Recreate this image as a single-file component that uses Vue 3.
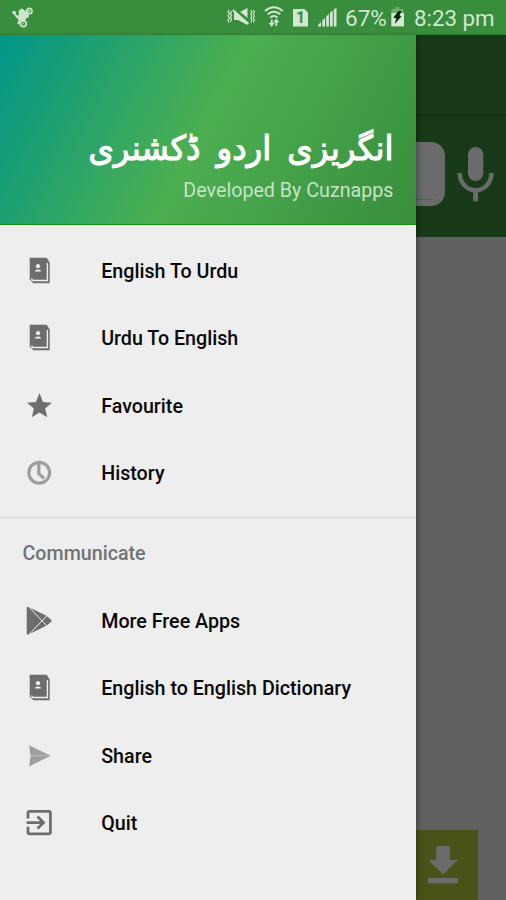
<script setup>
const primary = [
  { label: 'English To Urdu', icon: 'book' },
  { label: 'Urdu To English', icon: 'book' },
  { label: 'Favourite', icon: 'star' },
  { label: 'History', icon: 'clock' },
]
const communicate = [
  { label: 'More Free Apps', icon: 'play' },
  { label: 'English to English Dictionary', icon: 'book' },
  { label: 'Share', icon: 'send' },
  { label: 'Quit', icon: 'exit' },
]
const groups = [
  { title: '', items: primary },
  { title: 'Communicate', items: communicate },
]
</script>

<template>
  <div class="screen">
    <header class="status">
      <svg class="bike" width="24" height="35" viewBox="11 0 24 35">
        <g fill="none" stroke="#cfe5cf">
          <circle cx="29.3" cy="11" r="2.7" stroke-width="1.7" />
          <circle cx="23.3" cy="23.8" r="2.9" stroke-width="1.7" />
          <path d="M14 13l3 4 4-2M18 24l2-4" stroke-width="2" />
        </g>
        <path fill="#cfe5cf" d="M12 11.5l2.5-.8 1.6 1.5-1 2-2.4-.2zM18.500 11l3-2.500 2.500 1 1 2 3.500 1.200.5 4-3 2-1.500 2.800-4-.5-3-2 1.500-3.500zM25 11l2.2-1.2 1.6 1.2-2 2z" />
        <circle cx="23.3" cy="23.8" r=".8" fill="#cfe5cf" /><circle cx="29.3" cy="11" r=".9" fill="#cfe5cf" />
      </svg>
      <svg class="mute" width="30" height="35" viewBox="227 0 30 35">
        <g fill="none" stroke="#d3e7d3" stroke-width="1.2">
          <path d="M229 10l-1 2 1.5 2-1.5 2 1.5 2-1.5 2 1 2.5M231.500 11l-1 2 1 2-1 2 1 2-1 3M250.800 10l1 2-1 2 1 2-1 2 1 2-1 2.500M253.300 10l1 2-1 2 1 2-1 2 1 2-1 2.500" />
        </g>
        <path fill="#d3e7d3" d="M234 13h4l9.500-5v17l-9.500-5h-4z" />
        <path d="M231.500 7.500l18 14.500" stroke="#388e3c" stroke-width="4" />
        <path d="M232.800 10l15.700 14" stroke="#d3e7d3" stroke-width="1.900" />
      </svg>
      <svg class="wifi" width="22" height="35" viewBox="263 0 22 35">
        <g fill="none" stroke="#d3e7d3" stroke-width="1.900">
          <path d="M265 11q8.900-7.500 17.800 0M267.600 14.200q6.300-5 12.600 0M270.300 17.400q3.600-2.700 7.200 0" />
          <path d="M271.800 19.500v6M276.300 20v6" stroke-width="1.700" />
        </g>
        <path fill="#d3e7d3" d="M268.500 22.700h6.200l-3.200 4zM273.300 22.300h6l-3-3.800z" />
      </svg>
      <span class="sim">1</span>
      <svg class="signal" width="20" height="35" viewBox="318 0 20 35">
        <path fill="#d3e7d3" d="M318 26.500v-1.500l3-3v4.500zM322.300 26.500v-6l2.700-2.500v8.500zM326.200 26.500v-10l2.700-2.700v12.700zM330 26.500v-13.800l2.700-2.200v16zM333.800 26.500v-17l2.700-1.700v18.700z" />
      </svg>
      <span class="pct">67%</span>
      <svg class="battery" width="14" height="35" viewBox="391 0 14 35">
        <path fill="#6fae71" d="M395.500 7h4v2h4v5h-12v-5h4z" />
        <path fill="#d3e7d3" d="M391.300 13h12.700v13.400h-12.700z" />
        <path fill="#0a260d" d="M398.500 11h3l-2 4.500 2 .8-6.800 7.700 1.600-5.700-3-.6z" />
      </svg>
      <span class="time">8:23 pm</span>
    </header>

    <main class="page">
      <div class="toolbar"></div>
      <div class="search">
        <div class="field"><i></i></div>
        <svg class="mic" width="38" height="58" viewBox="456 145 38 58">
          <rect x="468" y="147" width="15.300" height="34" rx="7.650" fill="#6b6b6b" />
          <path d="M459.700 173a15.900 17.200 0 0 0 31.800 0" fill="none" stroke="#6b6b6b" stroke-width="4.400" />
          <path d="M473.100 190h5v11.300h-5z" fill="#6b6b6b" />
        </svg>
      </div>
      <div class="body">
        <div class="download">
          <svg width="32" height="40" viewBox="427 845 32 40">
            <path fill="#6b6b6b" d="M436.300 846h13.500v14h8l-14.800 14.600-14.800-14.600h8.100zM428 878h30v5.200h-30z" />
          </svg>
        </div>
      </div>
    </main>

    <aside class="drawer">
      <div class="hero">
        <h1 dir="rtl" lang="ur">انگریزی اردو ڈکشنری</h1>
        <p>Developed By Cuznapps</p>
      </div>
      <nav>
        <section v-for="(group, g) in groups" :key="g" class="group">
          <h2 v-if="group.title">{{ group.title }}</h2>
          <a v-for="item in group.items" :key="item.label" class="row">
            <svg width="34" height="34" viewBox="0 0 34 34">
              <g v-if="item.icon === 'book'">
                <path fill="#6d6d6d" d="M7.700 3.800h17l3 4.700v20.700h-16.400l-3.600-4z" />
                <path d="M25.400 9v17.500h-14.500l-1.600-1.800" fill="none" stroke="#eee" stroke-width="1.400" />
                <circle cx="16" cy="12.200" r="2.100" fill="#eee" />
                <path d="M12.900 17.500q0-2 3.100-2t3.100 2z" fill="#eee" />
              </g>
              <path v-else-if="item.icon === 'star'" fill="#6d6d6d" transform="translate(2.600 2.200) scale(1.240)" d="M12 17.270L18.180 21l-1.640-7.030L22 9.240l-7.190-.610L12 1.500 9.190 8.630 2 9.240l5.460 4.730L5.820 21z" />
              <g v-else-if="item.icon === 'clock'" fill="none" stroke="#9e9e9e" stroke-width="3.200">
                <circle cx="17.200" cy="16.700" r="10.400" />
                <path d="M16.800 8v9.600l5.300 4.900" />
              </g>
              <g v-else-if="item.icon === 'play'">
                <path fill="#6d6d6d" d="M4.700 3.800q.3-1.400 1.800-.8l17.900 8.800 4.400 3.600q1.800 1.400 0 2.800l-4.400 3.600-17.900 8.800q-1.500.6-1.800-.8z" />
                <path d="M6.500 2.500l18.200 19.200M6.500 31.100l18.200-19.200" stroke="#eee" stroke-width="1" />
              </g>
              <g v-else-if="item.icon === 'send'">
                <path fill="#9e9e9e" d="M7 6.200l21.700 10.600-21.700 10.700 1.700-10.700z" />
                <path d="M8.500 16.800h17" stroke="#c8c8c8" stroke-width=".8" />
              </g>
              <path v-else fill="#6d6d6d" transform="translate(.4 -.2) scale(1.400)" d="M10.090 15.590L11.500 17l5-5-5-5-1.410 1.410L12.670 11H3v2h9.670l-2.580 2.590zM19 3H5c-1.110 0-2 .9-2 2v4h2V5h14v14H5v-4H3v4c0 1.100.89 2 2 2h14c1.100 0 2-.9 2-2V5c0-1.100-.9-2-2-2z" />
            </svg>
            <span>{{ item.label }}</span>
          </a>
        </section>
      </nav>
    </aside>
  </div>
</template>

<style>
body { margin: 0; }
</style>

<style scoped>
.screen { position: relative; display: flex; flex-direction: column; width: 506px; height: 900px; overflow: hidden; font-family: Roboto, "Liberation Sans", sans-serif; }
.status { display: flex; align-items: center; box-sizing: border-box; height: 35px; padding-left: 11px; background: #388e3c; color: #d3e7d3; white-space: nowrap; }
.status svg, .status span { flex: none; }
.mute { margin-left: 192px; }
.wifi { margin-left: 6px; }
.sim { width: 15px; height: 18px; margin-left: 8px; background: #d3e7d3; color: #388e3c; font-size: 16px; font-weight: 700; line-height: 18px; text-align: center; clip-path: polygon(0 0, 11px 0, 100% 4px, 100% 100%, 0 100%); }
.signal { margin-left: 10px; }
.pct { width: 46px; padding: 1px 0 0 7px; box-sizing: border-box; margin-right: 7px; font-size: 22.500px; }
.time { margin-left: 9px; padding-top: 1px; font-size: 22.300px; }
.page { flex: 1; display: flex; flex-direction: column; background: #616161; }
.toolbar { position: relative; height: 79px; background: #183a18; box-shadow: 0 1px 3px #102b10; }
.search { display: flex; align-items: center; justify-content: flex-end; box-sizing: border-box; height: 123px; padding: 0 12px 4px 0; background: #183a18; }
.field { display: flex; align-items: flex-end; box-sizing: border-box; width: 420px; height: 64px; padding: 0 11px 6px; margin-right: 11px; border-radius: 14px; background: #6b6b6b; }
.field i { flex: 1; height: 1px; background: #5a5a5a; }
.body { flex: 1; display: flex; align-items: flex-end; justify-content: flex-end; padding-right: 28px; }
.download { display: flex; box-sizing: border-box; width: 70px; height: 70px; padding: 15px 0 0 19px; background: #485417; }
.drawer { position: absolute; top: 35px; left: 0; bottom: 0; width: 416px; background: #eee; box-shadow: 1px 0 6px rgba(0, 0, 0, .4); clip-path: inset(0 -20px 0 0); }
.hero { display: flex; flex-direction: column; align-items: flex-end; justify-content: flex-end; box-sizing: border-box; height: 190px; padding: 0 22.500px 21px 0; border-bottom: 1px solid #129612; background: linear-gradient(118deg, #009688, #4caf50 49%, #388e3c); }
.hero h1 { margin: 0; color: #fff; font: 400 34px/46px "DejaVu Sans", sans-serif; word-spacing: 6px; white-space: nowrap; -webkit-text-stroke: 1.100px #fff; transform: translateY(-8px) scaleX(.955); transform-origin: right center; }
.hero p { margin: 0; color: #c6e3c7; font-size: 19.680px; line-height: 24px; }
.group { padding-top: 11.800px; }
.group + .group { margin-top: 10.700px; padding-top: 0; border-top: 1px solid #d3d3d3; }
.group h2 { margin: 0; padding-left: 22.500px; height: 68.300px; color: #737373; font-size: 19.680px; font-weight: 500; line-height: 72px; }
.row { display: flex; align-items: center; height: 67.500px; padding-left: 22px; color: #090909; font-size: 19.680px; font-weight: 500; }
.row svg { flex: none; margin-right: 45.200px; }
.row span { padding-top: 1.200px; }
</style>
